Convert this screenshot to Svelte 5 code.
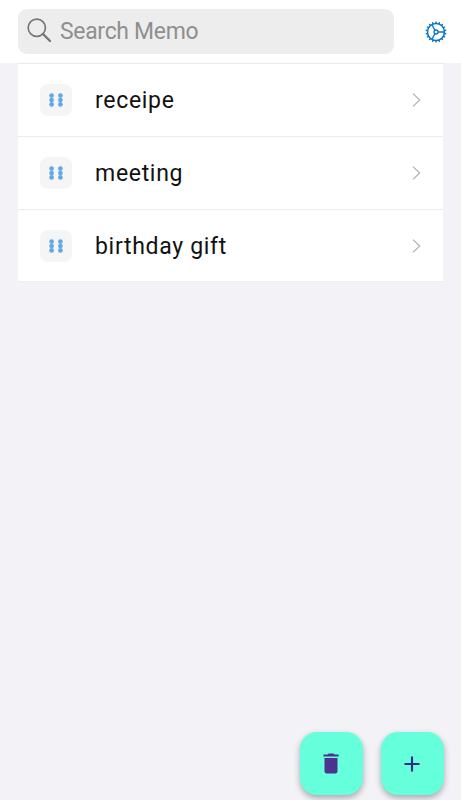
<script>
  const memos = ['receipe', 'meeting', 'birthday gift'];
  const teeth = Array.from({ length: 18 }, (_, i) => i * 20);
</script>

<main class="screen">
  <header class="topbar">
    <label class="search">
      <svg class="lens" width="25" height="25" viewBox="0 0 25 25" fill="none" stroke="#777" aria-hidden="true">
        <circle cx="9.8" cy="9.8" r="8.6" stroke-width="1.7" />
        <path d="M16 16l7 7" stroke-width="2.4" stroke-linecap="round" />
      </svg>
      <input type="text" placeholder="Search Memo" />
    </label>
    <button class="settings" aria-label="Settings">
      <svg width="22" height="22" viewBox="0 0 22 22" fill="none" stroke="#0874c4">
        <circle cx="11" cy="11" r="8.5" stroke-width="1.5" />
        <circle cx="11" cy="11" r="2" stroke-width="1.3" />
        <path d="M13 11h6.4M10 9.2L6.8 3.7M10 12.8l-3.2 5.5" stroke-width="1.3" />
        {#each teeth as angle}
          <path d="M11 .5v2.2" stroke-width="1.4" transform="rotate({angle} 11 11)" />
        {/each}
      </svg>
    </button>
  </header>

  <ul class="list">
    {#each memos as memo}
      <li class="row">
        <span class="handle">
          <svg width="16" height="14" viewBox="0 0 16 14" fill="#64a8e3" aria-hidden="true">
            {#each [3.6, 12.4] as x}
              {#each [2.6, 7, 11.4] as y}
                <circle cx={x} cy={y} r="2.35" />
              {/each}
            {/each}
          </svg>
        </span>
        <span class="title">{memo}</span>
        <svg class="chevron" width="9" height="14" viewBox="0 0 9 14" fill="none" stroke="#adadad" stroke-width="1.1" aria-hidden="true">
          <path d="M1 .7L7.7 7 1 13.3" />
        </svg>
      </li>
    {/each}
  </ul>

  <footer class="actions">
    <button class="fab" aria-label="Delete memos">
      <svg width="16" height="21" viewBox="0 0 16 21" fill="#4b3490">
        <path d="M.4 1.6h4L5.5.5h5l1.1 1.1h4v2H.4zM1.5 4.9h13v13.3a2.2 2.2 0 0 1-2.2 2.2H3.7a2.2 2.2 0 0 1-2.2-2.2z" />
      </svg>
    </button>
    <button class="fab" aria-label="Add memo">
      <svg width="16" height="16" viewBox="0 0 16 16" fill="none" stroke="#382a80" stroke-width="2.1">
        <path d="M8 .5v15M.5 8h15" />
      </svg>
    </button>
  </footer>
</main>

<style>
  :global(body) { margin: 0; }
  .screen {
    box-sizing: border-box;
    height: 100vh;
    display: flex;
    flex-direction: column;
    overflow: hidden;
    background: #f2f2f7;
    font-family: Roboto, "Noto Sans", sans-serif;
  }
  button {
    display: flex;
    align-items: center;
    justify-content: center;
    padding: 0;
    border: 0;
    background: none;
  }
  .topbar {
    box-sizing: border-box;
    flex: none;
    display: flex;
    align-items: center;
    justify-content: space-between;
    height: 63px;
    padding: 0 14px 0 18px;
    background: #fff;
  }
  .search {
    box-sizing: border-box;
    width: 376px;
    height: 45px;
    display: flex;
    align-items: center;
    gap: 8px;
    padding-left: 9px;
    border-radius: 9px;
    background: #ededed;
  }
  .lens { flex: none; margin-bottom: 3px; }
  input {
    min-width: 0;
    flex: 1;
    margin-bottom: 1px;
    padding: 0;
    border: 0;
    outline: 0;
    background: none;
    font: 400 24px/30px Roboto, sans-serif;
    letter-spacing: -0.3px;
    transform: scaleX(0.955);
    transform-origin: left center;
  }
  input::placeholder { color: #8f8f8f; opacity: 1; }
  .list {
    margin: 0 18px;
    padding: 0;
    list-style: none;
    border-top: 1px solid #e9e9ec;
    background: #fff;
  }
  .row {
    box-sizing: border-box;
    height: 73px;
    display: flex;
    align-items: center;
    padding: 0 22px;
    border-bottom: 1px solid #ebebed;
  }
  .row:last-child { height: 72px; border-bottom-color: #ededf0; }
  .handle {
    width: 32px;
    height: 32px;
    display: flex;
    align-items: center;
    justify-content: center;
    border-radius: 8px;
    background: #f5f5f6;
  }
  .title {
    flex: 1;
    margin-left: 22.5px;
    color: #111;
    font-size: 24px;
    line-height: 30px;
    letter-spacing: 0.7px;
    transform: scaleX(0.96);
    transform-origin: left center;
  }
  .actions {
    display: flex;
    justify-content: flex-end;
    gap: 18px;
    margin-top: auto;
    padding: 0 17.5px 5px 0;
  }
  .fab {
    width: 63px;
    height: 63px;
    border-radius: 17px;
    background: #66ffdc;
    box-shadow: 0 3px 6px rgba(0, 0, 0, 0.3);
  }
</style>
